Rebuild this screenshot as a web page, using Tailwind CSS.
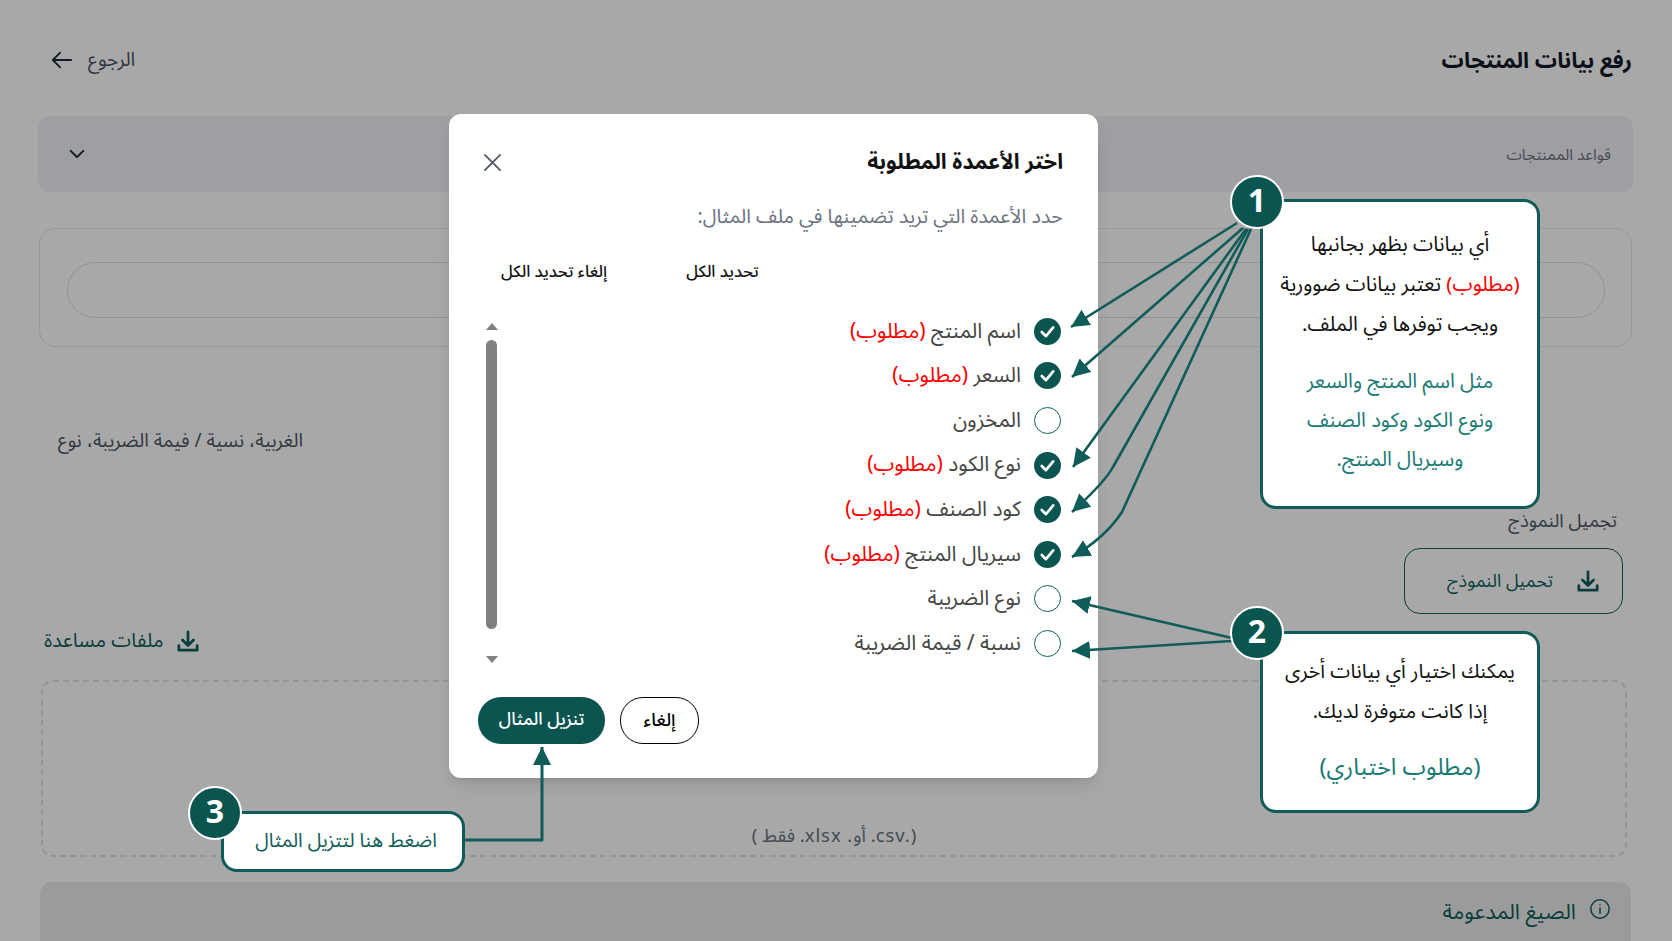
<!DOCTYPE html>
<html lang="ar" dir="rtl">
<head>
<meta charset="UTF-8">
<title>رفع بيانات المنتجات</title>
<script src="https://cdn.jsdelivr.net/npm/@tailwindcss/browser@4"></script>
</head>
<body class="bg-white">
<div class="relative h-[941px] w-[1672px] overflow-hidden bg-white font-['Noto_Sans_Arabic','DejaVu_Sans',sans-serif]">

  <!-- page behind the dialog -->
  <div class="flex flex-col">
    <header class="mt-[37px] flex h-12 items-center justify-between pr-10 pl-[51px]">
      <h1 class="text-[22px] font-bold text-[#111827]">رفع بيانات المنتجات</h1>
      <a class="flex -translate-y-px items-center gap-[15px] text-[19.5px] text-[#4b5563]">
        <span>الرجوع</span>
        <svg class="h-[22px] w-[22px]" viewBox="0 0 24 24" fill="none" stroke="#1f2937" stroke-width="2" stroke-linecap="round" stroke-linejoin="round"><path d="M22 12H3M10 4l-8 8 8 8"/></svg>
      </a>
    </header>

    <div class="mt-[31px] mr-[39px] ml-[38px] flex h-[76px] items-center justify-between rounded-xl bg-[#f0f0f7] pr-[22px] pl-[30px]">
      <span class="translate-y-[2px] text-[15.5px] text-[#6b7280]">قواعد الممنتجات</span>
      <svg class="h-[18px] w-[18px]" viewBox="0 0 20 20" fill="none" stroke="#1f2937" stroke-width="2.2" stroke-linecap="round" stroke-linejoin="round"><path d="M3 6.5l7 7 7-7"/></svg>
    </div>

    <div class="mt-9 mr-10 ml-[39px] h-[119px] rounded-2xl border border-[#e7e7e7] pt-[33px] pr-[26px] pl-[27px]">
      <div class="h-14 rounded-full border border-[#dedede]"></div>
    </div>

    <p class="mt-[82px] pl-[58px] text-left text-[19px] leading-6 text-[#4b5563]" dir="ltr"><span dir="rtl">الغربية، نسية / فيمة الضريبة، نوع</span></p>

    <p class="mt-[57px] pr-[55px] text-[18.5px] leading-6 text-[#4b5563]">تجميل النموذج</p>

    <div class="mt-[14px] mr-[49px] flex h-[66px] w-[219px] items-center gap-[24px] rounded-2xl border-[1.5px] border-[#0f5f5b] pr-[23px]">
      <svg class="h-[22px] w-[22px]" viewBox="0 0 24 24" fill="none" stroke="#0f5f5b" stroke-width="3" stroke-linecap="round" stroke-linejoin="round"><path d="M12 2v14M6 11l6 6 6-6M2 17v5h20v-5"/></svg>
      <span class="text-[18px] text-[#0f5f5b]">تحميل النموذج</span>
    </div>

    <div class="mt-[15px] flex h-6 items-center justify-end gap-[14px] pl-[44px]">
      <svg class="h-[22px] w-[22px]" viewBox="0 0 24 24" fill="none" stroke="#0f5f5b" stroke-width="3" stroke-linecap="round" stroke-linejoin="round"><path d="M12 2v14M6 11l6 6 6-6M2 17v5h20v-5"/></svg>
      <span class="text-[20px] text-[#0f5f5b]">ملفات مساعدة</span>
    </div>

    <div class="mt-[27px] mr-[45px] ml-[41px] flex h-[177px] items-end justify-center rounded-xl border-2 border-dashed border-[#e3e3e3] pb-1">
      <span class="text-[18.5px] tracking-wider text-[#6b7280]" dir="ltr">( فقط .xlsx .<bdi>أو</bdi> .csv.)</span>
    </div>

    <div class="mt-[25px] mr-[41px] ml-10 flex h-[80px] items-start gap-[13px] rounded-xl bg-[#ebebeb] pt-4 pr-5">
      <svg class="h-[22px] w-[22px]" viewBox="0 0 24 24" fill="none" stroke="#0f5f5b" stroke-width="1.6" stroke-linecap="round"><circle cx="12" cy="12" r="10"/><path d="M12 11v6M12 7.5v.2"/></svg>
      <span class="text-[21.5px] leading-[28px] text-[#0f5f5b]">الصيغ المدعومة</span>
    </div>
  </div>

  <div class="absolute inset-0 bg-black/34"></div>

  <!-- dialog -->
  <div class="absolute top-[114px] left-[449px] flex h-[664px] w-[649px] flex-col rounded-xl bg-white pt-8 pr-[35px] pl-[29px] shadow-lg">
    <div class="flex h-8 items-center justify-between">
      <h2 class="text-[21.5px] font-bold text-[#111]">اختر الأعمدة المطلوبة</h2>
      <svg class="ml-[5px] h-[19px] w-[19px]" viewBox="0 0 20 20" fill="none" stroke="#4b5563" stroke-width="1.8" stroke-linecap="round"><path d="M2 2l16 16M18 2L2 18"/></svg>
    </div>
    <p class="mt-[27px] text-[19.75px] leading-6 text-[#6b7280]">حدد الأعمدة التي تريد تضمينها في ملف المثال:</p>

    <div class="mt-[31px] flex h-[24px] items-center justify-end gap-[79px] pl-[23px] text-[16.5px] font-medium text-[#111]">
      <button>تحديد الكل</button>
      <button>إلغاء تحديد الكل</button>
    </div>

    <div class="mt-[25px] flex h-[381px]">
      <ul class="flex flex-1 flex-col pr-[2px] text-[21px] text-[#444]">
        <li class="flex h-[44.6px] shrink-0 items-center gap-[13px]">
          <svg class="h-[27px] w-[27px]" viewBox="0 0 26 26"><circle cx="13" cy="13" r="13" fill="#0b5551"/><path d="M7.5 13.5l4 4 7-8.5" fill="none" stroke="#fff" stroke-width="2.6" stroke-linecap="round" stroke-linejoin="round"/></svg>
          <span>اسم المنتج <span class="text-[#f00]">(مطلوب)</span></span>
        </li>
        <li class="flex h-[44.6px] shrink-0 items-center gap-[13px]">
          <svg class="h-[27px] w-[27px]" viewBox="0 0 26 26"><circle cx="13" cy="13" r="13" fill="#0b5551"/><path d="M7.5 13.5l4 4 7-8.5" fill="none" stroke="#fff" stroke-width="2.6" stroke-linecap="round" stroke-linejoin="round"/></svg>
          <span>السعر <span class="text-[#f00]">(مطلوب)</span></span>
        </li>
        <li class="flex h-[44.6px] shrink-0 items-center gap-[13px]">
          <span class="h-[27px] w-[27px] rounded-full border-[1.5px] border-[#0f5f5b]"></span>
          <span>المخزون</span>
        </li>
        <li class="flex h-[44.6px] shrink-0 items-center gap-[13px]">
          <svg class="h-[27px] w-[27px]" viewBox="0 0 26 26"><circle cx="13" cy="13" r="13" fill="#0b5551"/><path d="M7.5 13.5l4 4 7-8.5" fill="none" stroke="#fff" stroke-width="2.6" stroke-linecap="round" stroke-linejoin="round"/></svg>
          <span>نوع الكود <span class="text-[#f00]">(مطلوب)</span></span>
        </li>
        <li class="flex h-[44.6px] shrink-0 items-center gap-[13px]">
          <svg class="h-[27px] w-[27px]" viewBox="0 0 26 26"><circle cx="13" cy="13" r="13" fill="#0b5551"/><path d="M7.5 13.5l4 4 7-8.5" fill="none" stroke="#fff" stroke-width="2.6" stroke-linecap="round" stroke-linejoin="round"/></svg>
          <span>كود الصنف <span class="text-[#f00]">(مطلوب)</span></span>
        </li>
        <li class="flex h-[44.6px] shrink-0 items-center gap-[13px]">
          <svg class="h-[27px] w-[27px]" viewBox="0 0 26 26"><circle cx="13" cy="13" r="13" fill="#0b5551"/><path d="M7.5 13.5l4 4 7-8.5" fill="none" stroke="#fff" stroke-width="2.6" stroke-linecap="round" stroke-linejoin="round"/></svg>
          <span>سيريال المنتج <span class="text-[#f00]">(مطلوب)</span></span>
        </li>
        <li class="flex h-[44.6px] shrink-0 items-center gap-[13px]">
          <span class="h-[27px] w-[27px] rounded-full border-[1.5px] border-[#0f5f5b]"></span>
          <span>نوع الضريبة</span>
        </li>
        <li class="flex h-[44.6px] shrink-0 items-center gap-[13px]">
          <span class="h-[27px] w-[27px] rounded-full border-[1.5px] border-[#0f5f5b]"></span>
          <span>نسبة / قيمة الضريبة</span>
        </li>
      </ul>
      <div class="ml-[6px] flex w-[15px] flex-col items-center pt-[14px]">
        <span class="h-0 w-0 border-x-[6px] border-b-[7px] border-x-transparent border-b-[#808080]"></span>
        <span class="mt-[10px] h-[289px] w-[11px] shrink-0 rounded-full bg-[#808080]"></span>
        <span class="mt-[27px] h-0 w-0 border-x-[6px] border-t-[7px] border-x-transparent border-t-[#808080]"></span>
      </div>
    </div>

    <div class="mt-[7px] flex justify-end gap-[15px]">
      <button class="h-[47px] w-[79px] rounded-[23px] border border-black text-[18px] font-medium text-black">إلغاء</button>
      <button class="h-[47px] w-[127px] rounded-[23px] bg-[#0b5551] text-[17.5px] font-medium text-white">تنزيل المثال</button>
    </div>
  </div>

  <!-- annotation arrows -->
  <svg class="absolute inset-0 h-full w-full" viewBox="0 0 1672 941" fill="none" stroke="#0f5c58" stroke-width="2.6" stroke-linejoin="round">
    <defs>
      <marker id="tip" markerUnits="userSpaceOnUse" markerWidth="20" markerHeight="18" refX="18" refY="9" orient="auto">
        <path d="M0 0L18 9L0 18z" fill="#0f5c58" stroke="none"/>
      </marker>
    </defs>
    <path marker-end="url(#tip)" d="M1237 223L1071 327"/>
    <path marker-end="url(#tip)" d="M1243 228L1072 377"/>
    <path marker-end="url(#tip)" d="M1246 229L1073 467"/>
    <path marker-end="url(#tip)" d="M1248 229L1113 467Q1105 482 1072 512"/>
    <path marker-end="url(#tip)" d="M1251 229L1122 512Q1105 538 1072 557"/>
    <path marker-end="url(#tip)" d="M1232 638L1072 601"/>
    <path marker-end="url(#tip)" d="M1232 641L1072 651"/>
    <path marker-end="url(#tip)" stroke-width="3" d="M464 840H542V747"/>
  </svg>

  <!-- callouts -->
  <div class="absolute top-[199px] left-[1260px] flex h-[310px] w-[280px] flex-col items-center rounded-2xl border-[3px] border-[#0f5c58] bg-white pt-[23px] text-[20.4px] leading-[40px] text-[#111]">
    <p>أي بيانات بظهر بجانبها</p>
    <p><span class="text-[#f00]">(مطلوب)</span> تعتبر بيانات ضوورية</p>
    <p>ويجب توفرها في الملف.</p>
    <p class="mt-[17px] leading-[39px] text-[#1a7a75]">مثل اسم المنتج والسعر</p>
    <p class="leading-[39px] text-[#1a7a75]">ونوع الكود وكود الصنف</p>
    <p class="leading-[39px] text-[#1a7a75]">وسيريال المنتج.</p>
  </div>

  <div class="absolute top-[631px] left-[1260px] flex h-[182px] w-[280px] flex-col items-center rounded-2xl border-[3px] border-[#0f5c58] bg-white pt-[18px] text-[20.2px] leading-[40px] text-[#111]">
    <p>يمكنك اختيار أي بيانات أخرى</p>
    <p>إذا كانت متوفرة لديك.</p>
    <p class="mt-[16px] text-[23.6px] text-[#1a7a75]">(مطلوب اختباري)</p>
  </div>

  <div class="absolute top-[811px] left-[221px] flex h-[61px] w-[244px] items-center justify-center rounded-2xl border-[3px] border-[#0f5c58] bg-white pb-[2px] pl-[6px] text-[19.5px] text-[#0f5c58]">اضغط هنا لتتزيل المثال</div>

  <span class="absolute top-[175px] left-[1230px] flex h-[54px] w-[54px] items-center justify-center rounded-full border-2 border-white bg-[#0b5551] text-[32px] font-bold text-white">1</span>
  <span class="absolute top-[606px] left-[1230px] flex h-[54px] w-[54px] items-center justify-center rounded-full border-2 border-white bg-[#0b5551] text-[32px] font-bold text-white">2</span>
  <span class="absolute top-[786px] left-[188px] flex h-[54px] w-[54px] items-center justify-center rounded-full border-2 border-white bg-[#0b5551] text-[32px] font-bold text-white">3</span>
</div>
</body>
</html>
